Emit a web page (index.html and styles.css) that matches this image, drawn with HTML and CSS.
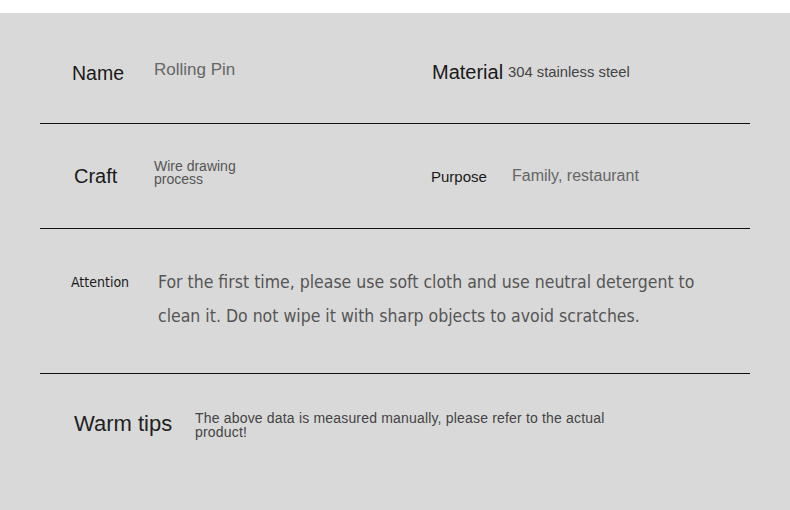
FILE: index.html
```html
<!DOCTYPE html>
<html>
<head>
<meta charset="utf-8">
<link rel="stylesheet" href="styles.css">
</head>
<body>
<div class="sheet">
  <div class="table">
    <div class="row row-1">
      <div class="label name">Name</div>
      <div class="val rolling">Rolling Pin</div>
      <div class="label material">Material</div>
      <div class="val steel">304 stainless steel</div>
    </div>
    <div class="row row-2">
      <div class="label craft">Craft</div>
      <div class="val wire">Wire drawing<br>process</div>
      <div class="label purpose">Purpose</div>
      <div class="val family">Family, restaurant</div>
    </div>
    <div class="row row-3">
      <div class="label attention">Attention</div>
      <div class="val note">For the first time, please use soft cloth and use neutral detergent to clean it. Do not wipe it with sharp objects to avoid scratches.</div>
    </div>
    <div class="row row-4">
      <div class="label warm">Warm tips</div>
      <div class="val tips">The above data is measured manually, please refer to the actual product!</div>
    </div>
  </div>
</div>
</body>
</html>
```
FILE: styles.css
```css
html, body {
  margin: 0;
  padding: 0;
  background: #ffffff;
}
body {
  font-family: "Liberation Sans", Arial, sans-serif;
  width: 790px;
  height: 510px;
  overflow: hidden;
}
.sheet {
  margin-top: 13px;
  background: #d9d9d9;
  height: 497px;
  padding: 0 40px;
}
.row {
  display: flex;
  border-bottom: 1px solid #111;
}
.label { color: #1a1a1a; }
.val { color: #555; }

.row-1 {
  height: 111px;
  align-items: center;
  padding-top: 7px;
  box-sizing: border-box;
}
.name { font-size: 19.5px; margin-left: 32px; width: 82px; padding-top: 3px; }
.rolling { font-size: 17px; color: #666; width: 278px; padding-bottom: 3px; }
.material { font-size: 20px; width: 76px; padding-top: 1px; }
.steel { font-size: 14.8px; color: #444; }

.row-2 {
  height: 104px;
  align-items: center;
}
.craft { font-size: 20px; margin-left: 34px; width: 80px; }
.wire { font-size: 14px; line-height: 13px; width: 277px; padding-bottom: 6px; }
.purpose { font-size: 15px; width: 81px; }
.family { font-size: 16px; color: #666; }

.row-3 {
  height: 145px;
  align-items: flex-start;
  padding-top: 36px;
  box-sizing: border-box;
  font-family: "Liberation Sans Narrow", "DejaVu Sans Condensed", "Liberation Sans", sans-serif;
}
.attention { font-size: 14px; margin-left: 31px; width: 87px; line-height: 34px; }
.note { font-size: 17.5px; line-height: 34px; width: 560px; color: #555; }

.row-4 {
  border-bottom: none;
  height: 100px;
  align-items: center;
}
.warm { font-size: 22px; margin-left: 34px; width: 121px; color: #222; }
.tips { font-size: 14px; line-height: 14px; width: 440px; color: #444; padding-top: 1px; letter-spacing: 0.18px; }
```
